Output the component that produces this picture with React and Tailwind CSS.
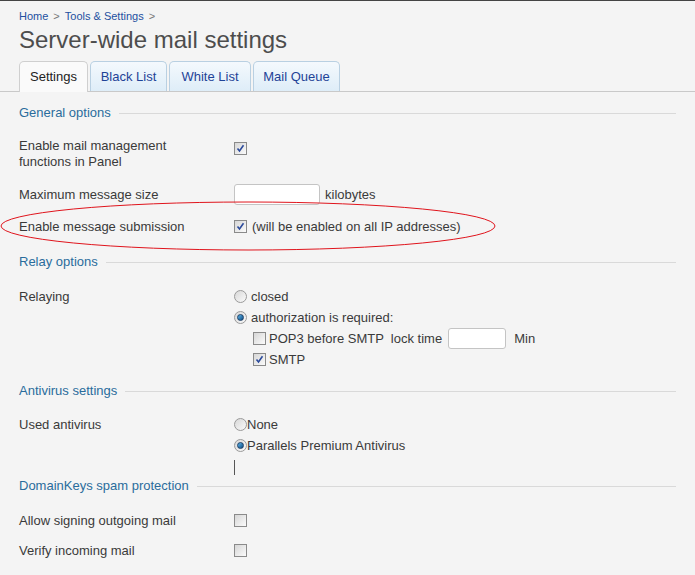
import React from 'react';

function Check({ checked }) {
  return (
    <span className="inline-flex items-center justify-center w-[13px] h-[13px] border border-[#8a8a8a] bg-gradient-to-br from-[#d6d6d6] to-[#fbfbfb] shrink-0">
      {checked && (
        <svg width="9" height="9" viewBox="0 0 9 9">
          <path d="M1.5 4.5 L3.5 7 L7.5 1.2" fill="none" stroke="#2b4a9b" strokeWidth="1.6" />
        </svg>
      )}
    </span>
  );
}

function Radio({ checked }) {
  return (
    <span className="inline-flex items-center justify-center w-[13px] h-[13px] rounded-full border border-[#9a9a9a] bg-gradient-to-br from-[#d8d8d8] to-[#fafafa] shrink-0">
      {checked && <span className="w-[7px] h-[7px] rounded-full bg-gradient-to-br from-[#5db4e8] to-[#0b4f86] border border-[#1d3f66]" />}
    </span>
  );
}

function Section({ title, className }) {
  return (
    <div className={`flex items-center h-[16px] ${className}`}>
      <span className="text-[13px] text-[#2a6c9c] whitespace-nowrap">{title}</span>
      <span className="flex-1 h-px bg-[#d9d9d9] ml-[8px]" />
    </div>
  );
}

const tabs = [
  { name: 'Settings', w: 'w-[69px]', active: true },
  { name: 'Black List', w: 'w-[77px]' },
  { name: 'White List', w: 'w-[82px]' },
  { name: 'Mail Queue', w: 'w-[87px]' },
];

export default function App() {
  return (
    <div
      className="relative bg-[#f4f4f4] min-h-[575px] border-t border-[#444] text-[13px] text-[#3a3a3a]"
      style={{ fontFamily: '"Liberation Sans", Arial, sans-serif' }}
    >
      <div className="px-[19px] pt-[7px] text-[11px] leading-[16px]">
        <span className="text-[#2350a0]">Home</span>
        <span className="text-[#777] mx-[5px]">&gt;</span>
        <span className="text-[#2350a0]">Tools &amp; Settings</span>
        <span className="text-[#777] ml-[5px]">&gt;</span>
      </div>
      <h1 className="px-[19px] mt-[2px] text-[24px] leading-[28px] text-[#4d4d4d]">Server-wide mail settings</h1>

      <div className="mt-[7px] flex gap-[2px] pl-[19px] border-b border-[#c9c9c9]">
        {tabs.map((t) => (
          <div
            key={t.name}
            className={`${t.w} h-[30px] flex items-center justify-center rounded-t-[5px] border border-b-0 ${
              t.active
                ? 'bg-[#fafafa] border-[#cfcfcf] text-[#222] -mb-px h-[31px]'
                : 'bg-gradient-to-b from-[#f4f9fd] to-[#deedf8] border-[#b9d0e2] text-[#1f4397]'
            }`}
          >
            {t.name}
          </div>
        ))}
      </div>

      <div className="px-[19px]">
        <Section title="General options" className="mt-[13px]" />

        <div className="grid grid-cols-[215px_1fr] mt-[17px]">
          <div className="leading-[16px]">Enable mail management<br />functions in Panel</div>
          <div className="pt-[1px]"><Check checked /></div>
        </div>

        <div className="grid grid-cols-[215px_1fr] mt-[14px] items-center h-[21px]">
          <div>Maximum message size</div>
          <div className="flex items-center">
            <input className="w-[86px] h-[21px] bg-white border border-[#c4c4c4] rounded-[3px]" />
            <span className="ml-[5px]">kilobytes</span>
          </div>
        </div>

        <div className="grid grid-cols-[215px_1fr] mt-[12px] items-center h-[16px]">
          <div>Enable message submission</div>
          <div className="flex items-center">
            <Check checked />
            <span className="ml-[5px]">(will be enabled on all IP addresses)</span>
          </div>
        </div>

        <Section title="Relay options" className="mt-[21px]" />

        <div className="grid grid-cols-[215px_1fr] mt-[16px] leading-[21px]">
          <div>Relaying</div>
          <div>
            <div className="flex items-center h-[21px]"><Radio /><span className="ml-[4px]">closed</span></div>
            <div className="flex items-center h-[21px]"><Radio checked /><span className="ml-[4px]">authorization is required:</span></div>
            <div className="flex items-center h-[21px] pl-[19px]">
              <Check />
              <span className="ml-[3px] whitespace-pre">POP3 before SMTP  lock time</span>
              <input className="ml-[6px] w-[58px] h-[21px] bg-white border border-[#c4c4c4] rounded-[3px]" />
              <span className="ml-[8px]">Min</span>
            </div>
            <div className="flex items-center h-[21px] pl-[19px]"><Check checked /><span className="ml-[3px]">SMTP</span></div>
          </div>
        </div>

        <Section title="Antivirus settings" className="mt-[13px]" />

        <div className="grid grid-cols-[215px_1fr] mt-[15px] leading-[21px]">
          <div>Used antivirus</div>
          <div>
            <div className="flex items-center h-[21px]"><Radio /><span>None</span></div>
            <div className="flex items-center h-[21px]"><Radio checked /><span>Parallels Premium Antivirus</span></div>
            <div className="h-[21px] pt-[4px]"><div className="w-px h-[15px] bg-[#555]" /></div>
          </div>
        </div>

        <Section title="DomainKeys spam protection" className="mt-[1px]" />

        <div className="grid grid-cols-[215px_1fr] mt-[16px] items-center h-[21px]">
          <div>Allow signing outgoing mail</div>
          <div className="flex items-center"><Check /></div>
        </div>
        <div className="grid grid-cols-[215px_1fr] mt-[9px] items-center h-[21px]">
          <div>Verify incoming mail</div>
          <div className="flex items-center"><Check /></div>
        </div>
      </div>

      <svg className="absolute left-0 top-0 pointer-events-none" width="695" height="575">
        <ellipse cx="248" cy="225" rx="247" ry="24" fill="none" stroke="#e0141c" strokeWidth="1" />
      </svg>
    </div>
  );
}
